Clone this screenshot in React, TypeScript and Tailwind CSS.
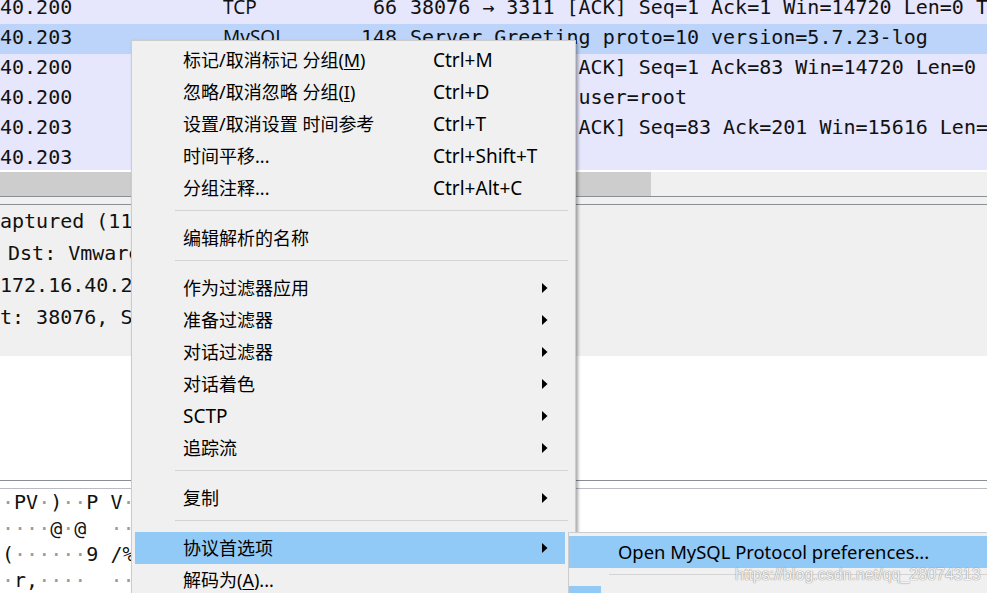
import { ReactNode } from 'react';

type Packet = { dst: string; proto: string; len: string; info: string; sel?: boolean };

const packets: Packet[] = [
  { dst: '40.200', proto: 'TCP', len: '66', info: '38076 → 3311 [ACK] Seq=1 Ack=1 Win=14720 Len=0 TSval=2731' },
  { dst: '40.203', proto: 'MySQL', len: '148', info: 'Server Greeting proto=10 version=5.7.23-log', sel: true },
  { dst: '40.200', proto: 'TCP', len: '66', info: '38076 → 3311 [ACK] Seq=1 Ack=83 Win=14720 Len=0 TSval' },
  { dst: '40.200', proto: 'MySQL', len: '183', info: 'Login Request user=root' },
  { dst: '40.203', proto: 'TCP', len: '66', info: '3311 → 38076 [ACK] Seq=83 Ack=201 Win=15616 Len=0 TSval' },
  { dst: '40.203', proto: 'MySQL', len: '77', info: 'Response OK' },
];

const hexLines: ReactNode[] = [
  <><D />PV<D />)<D /><D />P V<D /></>,
  <><D /><D /><D /><D />@<D />@  <D /><D /></>,
  <>(<D /><D /><D /><D /><D /><D />9 /%</>,
  <><D />r,<D /><D /><D /><D />  <D /><D /></>,
];

function D() {
  return <span className="text-[#9a9a9a]">·</span>;
}

function Arrow() {
  return (
    <svg width="6" height="10" viewBox="0 0 6 10" className="block">
      <polygon points="0,0 5.5,5 0,10" fill="#000" />
    </svg>
  );
}

type Item = { label: ReactNode; shortcut?: string; sub?: boolean; active?: boolean } | 'sep';

const items: Item[] = [
  { label: <>标记/取消标记 分组(<span className="underline underline-offset-2">M</span>)</>, shortcut: 'Ctrl+M' },
  { label: <>忽略/取消忽略 分组(<span className="underline underline-offset-2">I</span>)</>, shortcut: 'Ctrl+D' },
  { label: '设置/取消设置 时间参考', shortcut: 'Ctrl+T' },
  { label: '时间平移...', shortcut: 'Ctrl+Shift+T' },
  { label: '分组注释...', shortcut: 'Ctrl+Alt+C' },
  'sep',
  { label: '编辑解析的名称' },
  'sep',
  { label: '作为过滤器应用', sub: true },
  { label: '准备过滤器', sub: true },
  { label: '对话过滤器', sub: true },
  { label: '对话着色', sub: true },
  { label: <span className="text-[19px]">SCTP</span>, sub: true },
  { label: '追踪流', sub: true },
  'sep',
  { label: '复制', sub: true },
  'sep',
  { label: '协议首选项', sub: true, active: true },
  { label: <>解码为(<span className="underline underline-offset-2">A</span>)...</> },
];

function Separator() {
  return (
    <div className="h-[18px] pt-[6px] pl-[43px]">
      <div className="h-px w-[393px] bg-[#d4d4d4]" />
    </div>
  );
}

function MenuRow({ item }: { item: Exclude<Item, 'sep'> }) {
  return (
    <div
      className={
        'ml-[3px] flex h-[32px] w-[430px] items-center pl-[48px] pr-[17px] ' +
        (item.active ? 'bg-[#91c9f7]' : '')
      }
    >
      <span className="w-[250px] whitespace-nowrap">{item.label}</span>
      <span className="flex-1 whitespace-nowrap text-[19px]">{item.shortcut}</span>
      {item.sub && <Arrow />}
    </div>
  );
}

export default function App() {
  return (
    <div className="relative h-[593px] w-[987px] overflow-hidden bg-white font-['DejaVu_Sans_Mono',monospace] text-[20px] text-[#111]">
      {/* packet list */}
      <div className="h-[170px] overflow-hidden">
        <div className="-mt-[6px]">
          {packets.map((p, i) => (
            <div
              key={i}
              className={'flex h-[30px] items-center whitespace-nowrap pb-[4px] ' + (p.sel ? 'bg-[#bcd4fa]' : 'bg-[#e6e6fc]')}
            >
              <span className="w-[223px] shrink-0">{p.dst}</span>
              <span className="w-[110px] shrink-0 font-['Noto_Sans',sans-serif] text-[19px]">{p.proto}</span>
              <span className="w-[64px] shrink-0 text-right">{p.len}</span>
              <span className="ml-[13px]">{p.info}</span>
            </div>
          ))}
        </div>
      </div>
      <div className="h-[2px] bg-white" />
      <div className="h-[24px] bg-[#f0f0f0]">
        <div className="h-full w-[651px] bg-[#cdcdcd]" />
      </div>
      <div className="h-px bg-[#8a8f96]" />
      <div className="h-[7px] bg-[#f0f0f0]" />
      <div className="h-px bg-[#8a8f96]" />

      {/* packet details */}
      <div className="h-[151px] whitespace-nowrap bg-[#f0f0f0] leading-[32px]">
        <div>aptured (1184 bits) on interface 0</div>
        <div className="-ml-[4px]">&nbsp;Dst: Vmware_3a:91:0c</div>
        <div>172.16.40.203, Dst: 172.16.40.200</div>
        <div>t: 38076, Src Port: 3311</div>
      </div>
      <div className="h-[124px] bg-white" />
      <div className="h-px bg-[#8a8f96]" />
      <div className="h-[7px] bg-white" />
      <div className="h-px bg-[#b8bcc4]" />

      {/* bytes */}
      <div className="whitespace-pre pl-[2px] leading-[26px]">
        {hexLines.map((l, i) => (
          <div key={i}>{l}</div>
        ))}
      </div>

      {/* context menu */}
      <div className="absolute left-[131px] top-[40px] h-[570px] w-[445px] border border-[#cccccc] bg-[#f0f0f0] pt-[3px] font-['Noto_Sans','Noto_Sans_CJK_SC',sans-serif] text-[18px] text-black shadow-[2px_2px_3px_rgba(0,0,0,0.35)]">
        {items.map((it, i) => (it === 'sep' ? <Separator key={i} /> : <MenuRow key={i} item={it} />))}
      </div>

      {/* submenu */}
      <div className="absolute left-[568px] top-[532px] h-[80px] w-[430px] border border-[#cccccc] bg-[#f0f0f0] pt-[3px] font-['Noto_Sans','Noto_Sans_CJK_SC',sans-serif] text-[18.4px] text-black">
        <div className="flex h-[32px] items-center bg-[#91c9f7] pl-[49px]">Open MySQL Protocol preferences...</div>
        <div className="h-[18px] pt-[6px] pl-[40px]">
          <div className="h-px bg-[#d4d4d4]" />
        </div>
        <div className="h-[20px] w-[32px] bg-[#91c9f7]" />
      </div>

      {/* watermark */}
      <div className="absolute left-[735px] top-[563px] font-['Liberation_Sans',sans-serif] text-[16px] text-white/90 [text-shadow:0_0_1px_#8a8a8a,0_0_1px_#8a8a8a]">
        https://blog.csdn.net/qq_28074313
      </div>
    </div>
  );
}
